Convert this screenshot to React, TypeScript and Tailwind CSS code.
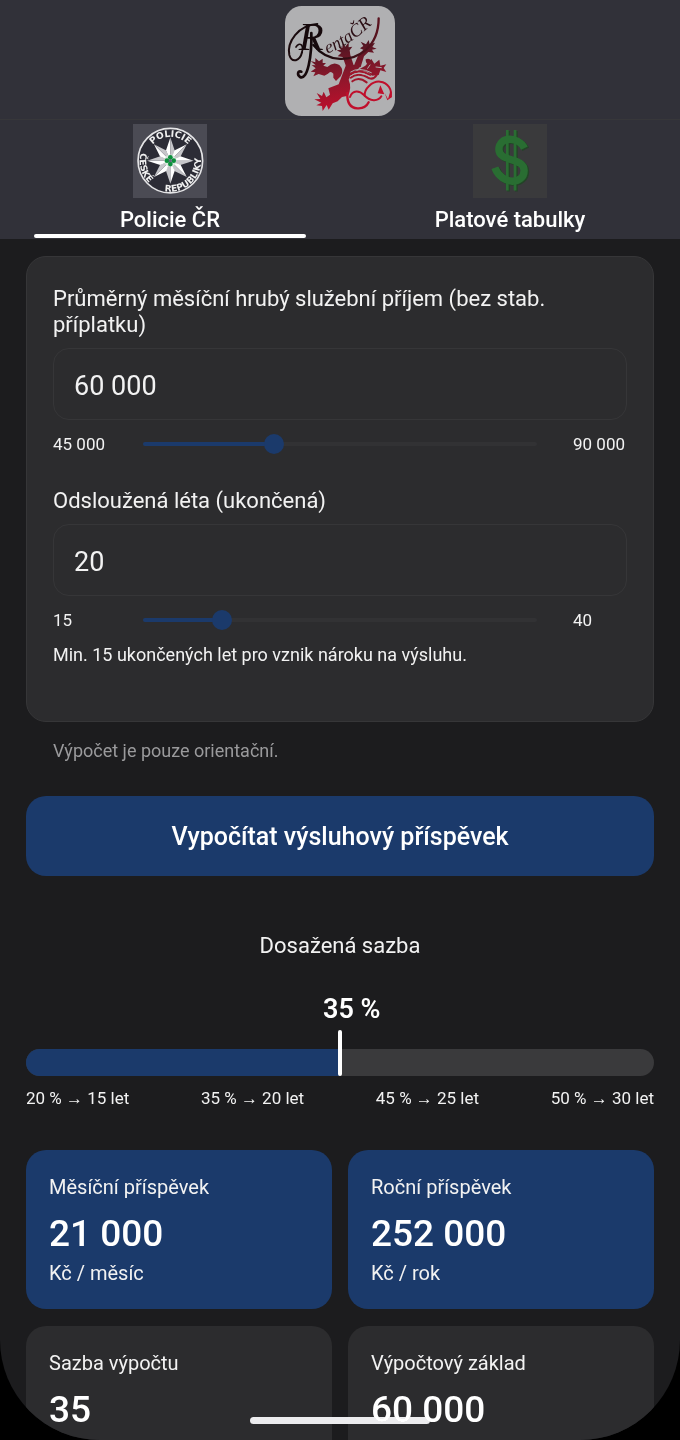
import React, { useState } from 'react';

const formatNumber = (value: number) => value.toString().replace(/\B(?=(\d{3})+$)/g, ' ');

const RentaLogo: React.FC = () => (
  <svg viewBox="45 19 330 330" className="w-[110px] h-[110px]" role="img" aria-label="RentaČR">
    <defs>
      <linearGradient id="lion" gradientUnits="userSpaceOnUse" x1="200" y1="130" x2="230" y2="330">
        <stop offset="0" stopColor="#4a1420" />
        <stop offset="0.45" stopColor="#86182b" />
        <stop offset="1" stopColor="#c00f2c" />
      </linearGradient>
      <linearGradient id="swash" gradientUnits="userSpaceOnUse" x1="60" y1="0" x2="330" y2="0">
        <stop offset="0" stopColor="#1c0b0e" />
        <stop offset="0.3" stopColor="#12080a" />
        <stop offset="1" stopColor="#5b1420" />
      </linearGradient>
      <path id="logoWord" d="M172 162 Q238 138 316 66" />
    </defs>
    <rect x="45" y="19" width="330" height="330" rx="50" fill="#b0b0b2" />
    <g fill="url(#lion)">
      {/* raised paws */}
      <path d="M205 140 L217 145 L218 130 L226 141 L236 128 L236 143 L247 141 L239 152 L241 166 L252 200 L228 200 L218 172 L203 170 L214 159 L200 152 L213 150 Z" />
      <path d="M270 146 L280 139 L272 126 L288 134 L296 121 L299 134 L315 129 L307 142 L320 147 L306 150 L312 159 L295 157 L282 170 L272 202 L250 202 L264 168 L280 150 Z" />
      {/* left arm */}
      <path d="M122 184 L136 188 L136 175 L147 185 L158 177 L158 190 L168 190 L160 198 L172 202 Q190 184 208 196 Q224 212 212 230 L198 244 L190 234 L190 222 Q182 212 174 222 L163 228 L146 223 L130 230 L136 218 L122 216 L137 206 L125 196 L137 197 Z" />
      {/* torso and hind leg */}
      <path d="M228 196 L274 196 Q262 214 244 222 L236 240 Q246 264 234 288 L216 292 L203 305 L188 311 L176 330 L170 316 L158 334 L156 319 L139 317 L154 309 L133 299 L151 298 L140 280 L156 289 L161 276 L169 293 L180 285 L175 266 L206 254 Z" />
      {/* head */}
      <path d="M286 198 L304 178 L313 192 L328 180 L331 198 L349 194 L341 205 L349 217 L331 212 L326 226 L306 228 L292 216 L262 212 Z" />
      <path d="M287 179 Q298 173 304 184 L298 197 Q286 193 287 179 Z" />
    </g>
    {/* mane */}
    <g fill="none" stroke="#a0162b" strokeWidth="6" strokeLinecap="round">
      <path d="M242 224 Q266 206 300 226" />
      <path d="M242 234 Q264 216 298 236 Q312 240 320 226" />
      <path d="M247 245 Q266 230 290 248" />
    </g>
    <g fill="none" stroke="#b0b0b2" strokeWidth="3" strokeLinecap="round">
      <path d="M240 230 Q264 210 302 231" />
      <path d="M242 217 Q266 200 304 219" />
      <path d="M318 202 L334 204 M293 206 L300 196" />
    </g>
    {/* tail */}
    <g fill="none" stroke="#c00f2c" strokeLinecap="round">
      <path strokeWidth="7" d="M232 280 Q230 324 262 326 Q286 328 296 308" />
      <path strokeWidth="6" d="M240 292 C248 270 268 272 282 286 C300 306 324 306 334 290" />
      <path strokeWidth="6" d="M284 288 C282 268 306 244 330 246 C354 248 368 272 361 292" />
    </g>
    <path fill="#c00f2c" d="M331 257 L343 284 L323 281 Z M344 280 L354 298 L362 272 L366 292 L352 302 Z" />
    {/* wordmark with its flourishes */}
    <g fill="none" stroke="url(#swash)" strokeLinecap="round">
      <path strokeWidth="6" d="M96 158 C90 184 66 192 58 166 C50 128 84 76 142 73" />
      <path strokeWidth="5" d="M96 158 C102 134 88 126 78 142" />
      <path strokeWidth="7" d="M130 136 C176 192 244 186 286 152 C314 128 326 92 326 56" />
      <path strokeWidth="8" d="M124 100 C126 170 112 244 90 232 C80 224 84 212 94 216" />
    </g>
    <text x="86" y="152" fontFamily="Liberation Serif, serif" fontStyle="italic" fontSize="122" fill="#16090c">R</text>
    <text fontFamily="Liberation Serif, serif" fontStyle="italic" fontSize="54" fill="#2a0d13">
      <textPath href="#logoWord">entaČR</textPath>
    </text>
  </svg>
);

const PoliceBadge: React.FC = () => (
  <svg viewBox="0 0 220 220" className="w-[74px] h-[74px] bg-[#4b4b54]" aria-hidden="true">
    <defs>
      <path id="badgeTop" d="M40 109 A71 71 0 0 1 182 109" />
      <path id="badgeBottom" d="M27 75 A91 91 0 1 0 195 75" />
    </defs>
    <circle cx="111" cy="109" r="96" fill="#2c2c36" stroke="#e4e4e6" strokeWidth="5" />
    <g fontFamily="DejaVu Sans, sans-serif" fontWeight="bold" fontSize="27" fill="#f0f0f0" textAnchor="middle">
      <text>
        <textPath href="#badgeTop" startOffset="50%">POLICIE</textPath>
      </text>
      <text>
        <textPath href="#badgeBottom" startOffset="60">ČESKÉ</textPath>
      </text>
      <text>
        <textPath href="#badgeBottom" startOffset="246">REPUBLIKY</textPath>
      </text>
    </g>
    {[0, 45, 90, 135, 180, 225, 270, 315].map((angle) => (
      <g key={angle} transform={`rotate(${angle} 111 109)`}>
        <path d="M111 40 L111 109 L98 79 Z" fill="#ffffff" />
        <path d="M111 40 L111 109 L124 79 Z" fill="#c6c6ca" />
      </g>
    ))}
    <circle cx="111" cy="109" r="18" fill="#d7e6dc" />
    <g fill="#0c8f3c">
      <circle cx="111" cy="99" r="7" />
      <circle cx="111" cy="119" r="7" />
      <circle cx="101" cy="109" r="7" />
      <circle cx="121" cy="109" r="7" />
    </g>
    <circle cx="111" cy="109" r="5" fill="#5d6b78" />
  </svg>
);

const DollarIcon: React.FC = () => (
  <svg viewBox="0 0 220 220" className="w-[74px] h-[74px] bg-[#3a3a3c]" aria-hidden="true">
    <g fill="none" stroke="#234427" transform="translate(4 3)">
      <path strokeWidth="8" d="M102 18 V198 M125 18 V198" />
      <path strokeWidth="22" d="M153 72 C135 36 77 36 77 76 C77 114 152 98 152 138 C152 180 86 184 65 130" />
    </g>
    <g fill="none" stroke="#296d32">
      <path strokeWidth="8" d="M102 18 V198 M125 18 V198" />
      <path strokeWidth="22" d="M153 72 C135 36 77 36 77 76 C77 114 152 98 152 138 C152 180 86 184 65 130" />
    </g>
  </svg>
);

interface TabProps {
  label: string;
  icon: React.ReactNode;
  active: boolean;
  onClick: () => void;
}

const Tab: React.FC<TabProps> = ({ label, icon, active, onClick }) => (
  <button role="tab" aria-selected={active} onClick={onClick} className="flex-1 flex flex-col items-center pt-1">
    {icon}
    <span className="mt-2 text-[22px] leading-7 font-medium">{label}</span>
    <span className={`w-4/5 h-1 rounded-full ${active ? 'bg-white' : 'bg-transparent'}`} />
  </button>
);

interface SliderFieldProps {
  id: string;
  label: string;
  value: number;
  min: number;
  max: number;
  step: number;
  onChange: (value: number) => void;
}

const SliderField: React.FC<SliderFieldProps> = ({ id, label, value, min, max, step, onChange }) => (
  <div>
    <label htmlFor={id} className="block text-[22px] leading-[26px]">{label}</label>
    <input
      id={id}
      type="text"
      inputMode="numeric"
      value={formatNumber(value)}
      onChange={(e) => onChange(Number(e.target.value.replace(/\D/g, '')))}
      className="block mt-[10px] w-full h-[72px] px-5 pt-[3px] rounded-2xl border border-[#363638] bg-transparent text-[27px] outline-none"
    />
    <div className="mt-3 h-6 flex items-center gap-[26px] text-[17px]">
      <span className="w-[54px] pt-[2px]">{formatNumber(min)}</span>
      <div className="relative flex-1 h-5 flex items-center px-[10px]">
        <div className="w-full h-1 rounded-full bg-[#323234]">
          <div className="h-full rounded-full bg-[#1b3a6b]" style={{ width: `${((value - min) / (max - min)) * 100}%` }} />
        </div>
        <input
          type="range"
          aria-label={label}
          min={min}
          max={max}
          step={step}
          value={value}
          onChange={(e) => onChange(Number(e.target.value))}
          className="absolute inset-0 w-full h-5 appearance-none bg-transparent [&::-webkit-slider-thumb]:appearance-none [&::-webkit-slider-thumb]:w-5 [&::-webkit-slider-thumb]:h-5 [&::-webkit-slider-thumb]:rounded-full [&::-webkit-slider-thumb]:bg-[#1b3a6b]"
        />
      </div>
      <span className="w-[54px] pt-[2px]">{formatNumber(max)}</span>
    </div>
  </div>
);

interface ResultCardProps {
  title: string;
  value: string;
  unit: string;
  highlighted?: boolean;
}

const ResultCard: React.FC<ResultCardProps> = ({ title, value, unit, highlighted }) => (
  <div className={`rounded-[20px] px-[23px] pt-6 pb-[23px] ${highlighted ? 'bg-[#1b3a6b]' : 'bg-[#2c2c2e]'}`}>
    <p className="text-[20px] leading-[26px]">{title}</p>
    <p className="mt-2 text-[37px] leading-[52px] font-medium text-white">{value}</p>
    <p className="text-[20px] leading-[26px]">{unit}</p>
  </div>
);

const RATE_STEPS = ['20 % → 15 let', '35 % → 20 let', '45 % → 25 let', '50 % → 30 let'];

const App: React.FC = () => {
  const [tab, setTab] = useState(0);
  const [income, setIncome] = useState(60000);
  const [years, setYears] = useState(20);
  const [result, setResult] = useState({ base: 60000, rate: 35 });

  const calculate = () => {
    let rate = 0;
    if (years >= 15) rate = 20 + Math.min(years - 15, 5) * 3;
    if (years > 20) rate += Math.min(years - 20, 5) * 2;
    if (years > 25) rate += Math.min(years - 25, 5);
    setResult({ base: income, rate });
  };

  const monthly = Math.round((result.base * result.rate) / 100);

  return (
    <div className="h-screen bg-black">
      <div className="relative h-full overflow-hidden rounded-b-[100px] bg-[#1c1c1e] text-[#f2f2f2] font-[Roboto,sans-serif]">
        <div className="h-full overflow-y-auto [scrollbar-width:none]">
          <header className="bg-[#313139]">
            <div className="flex justify-center pt-[6px] pb-[3px] border-b border-[#37373a]">
              <RentaLogo />
            </div>
            <div role="tablist" className="flex pb-[1px] text-white">
              <Tab label="Policie ČR" icon={<PoliceBadge />} active={tab === 0} onClick={() => setTab(0)} />
              <Tab label="Platové tabulky" icon={<DollarIcon />} active={tab === 1} onClick={() => setTab(1)} />
            </div>
          </header>

          <main className="px-[26px] pt-[17px] pb-12">
            <section className="px-[26px] pt-[29px] pb-[54px] rounded-[20px] border border-[#363638] bg-[#2c2c2e]">
              <SliderField
                id="income"
                label="Průměrný měsíční hrubý služební příjem (bez stab. příplatku)"
                value={income}
                min={45000}
                max={90000}
                step={1000}
                onChange={setIncome}
              />
              <div className="mt-8">
                <SliderField
                  id="years"
                  label="Odsloužená léta (ukončená)"
                  value={years}
                  min={15}
                  max={40}
                  step={1}
                  onChange={setYears}
                />
              </div>
              <p className="mt-[11px] text-[18px] leading-6">Min. 15 ukončených let pro vznik nároku na výsluhu.</p>
            </section>

            <p className="mt-[17px] px-[27px] text-[18px] leading-6 text-[#9a9a9c]">Výpočet je pouze orientační.</p>

            <button onClick={calculate} className="mt-[33px] w-full h-20 pt-[2px] rounded-[20px] bg-[#1b3a6b] text-[25px] font-medium text-white">
              Vypočítat výsluhový příspěvek
            </button>

            <section className="mt-[57px]">
              <h2 className="text-center text-[22px] leading-[26px]">Dosažená sazba</h2>
              <div className="relative mt-[90px] h-[27px] rounded-full bg-[#3a3a3c]">
                <div className="h-full rounded-l-full bg-[#1b3a6b]" style={{ width: '50%' }} />
                <div className="absolute bottom-0 left-1/2 -ml-[2px] w-1 h-[46px] rounded-full bg-white" />
                <p className="absolute bottom-[51px] left-1/2 -ml-[17px] text-[27px] leading-8 font-semibold text-white whitespace-nowrap">
                  {result.rate} %
                </p>
              </div>
              <div className="mt-[10px] flex justify-between text-[17px] leading-6">
                {RATE_STEPS.map((step) => (
                  <span key={step}>{step}</span>
                ))}
              </div>
            </section>

            <section className="mt-10 grid grid-cols-2 gap-x-4 gap-y-[17px]">
              <ResultCard title="Měsíční příspěvek" value={formatNumber(monthly)} unit="Kč / měsíc" highlighted />
              <ResultCard title="Roční příspěvek" value={formatNumber(monthly * 12)} unit="Kč / rok" highlighted />
              <ResultCard title="Sazba výpočtu" value={result.rate.toString()} unit="%" />
              <ResultCard title="Výpočtový základ" value={formatNumber(result.base)} unit="Kč" />
            </section>
          </main>
        </div>
        {/* home indicator */}
        <div className="absolute bottom-4 left-1/2 -translate-x-1/2 w-[180px] h-[7px] rounded-full bg-[#ececee] mix-blend-lighten" />
      </div>
    </div>
  );
};

export default App;
